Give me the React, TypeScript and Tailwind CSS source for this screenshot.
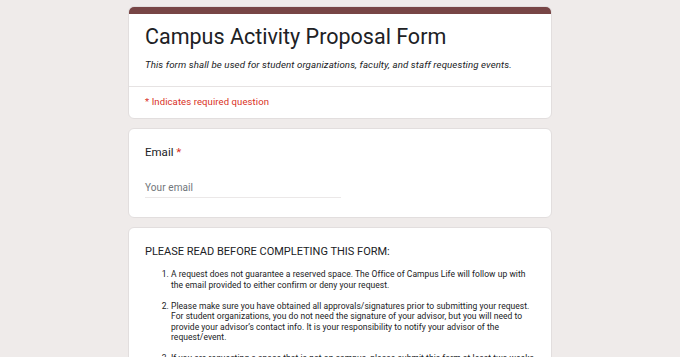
import React from "react";

export default function App() {
  return (
    <div className="min-h-[357px] w-full bg-[#efebea] pt-[6px]" style={{ fontFamily: "Roboto, 'Open Sans', sans-serif" }}>
      <div className="mx-auto flex w-[424px] flex-col gap-[9px]">
        {/* Header card */}
        <div className="overflow-hidden rounded-[6px] border border-[#e2dede] bg-white">
          <div className="h-[7px] bg-[#774545]" />
          <div className="px-[16px] pt-[8px] pb-[14px]">
            <div className="text-[21.5px] leading-[30px] text-[#202124]">
              Campus Activity Proposal Form
            </div>
            <div className="mt-[6px] text-[9.7px] italic leading-[14px] tracking-[0.1px] text-[#202124]">
              This form shall be used for student organizations, faculty, and staff requesting events.
            </div>
          </div>
          <div className="h-px bg-[#e6e3e3]" />
          <div className="px-[16px] pt-[8px] pb-[9px] text-[9.5px] leading-[14px] tracking-[0.1px] text-[#d93025]">
            * Indicates required question
          </div>
        </div>

        {/* Email card */}
        <div className="rounded-[6px] border border-[#e2dede] bg-white px-[16px] pt-[15px] pb-[19px]">
          <div className="text-[11.5px] leading-[16px] text-[#202124]">
            Email <span className="text-[#d93025]">*</span>
          </div>
          <div className="mt-[21px] w-[196px] border-b border-[#ebe8e8] pb-[2px] text-[10px] leading-[14px] tracking-[0.1px] text-[#70757a]">
            Your email
          </div>
        </div>

        {/* Read card */}
        <div className="rounded-[6px] border border-[#e2dede] bg-white px-[16px] pt-[16px] pb-[20px]">
          <div className="text-[11px] leading-[16px] text-[#202124]">
            PLEASE READ BEFORE COMPLETING THIS FORM:
          </div>
          <ol className="mt-[9px] flex flex-col gap-[10.5px] pl-[26px] pr-[1px] text-[8.5px] leading-[10.5px] tracking-[0.05px] text-[#202124]">
            <li className="list-decimal">
              A request does not guarantee a reserved space. The Office of Campus Life will follow up with the email provided to either confirm or deny your request.
            </li>
            <li className="list-decimal">
              Please make sure you have obtained all approvals/signatures prior to submitting your request. For student organizations, you do not need the signature of your advisor, but you will need to provide your advisor’s contact info. It is your responsibility to notify your advisor of the request/event.
            </li>
            <li className="list-decimal">
              If you are requesting a space that is not on campus, please submit this form at least two weeks prior to the date of your event.
            </li>
          </ol>
        </div>
      </div>
    </div>
  );
}
